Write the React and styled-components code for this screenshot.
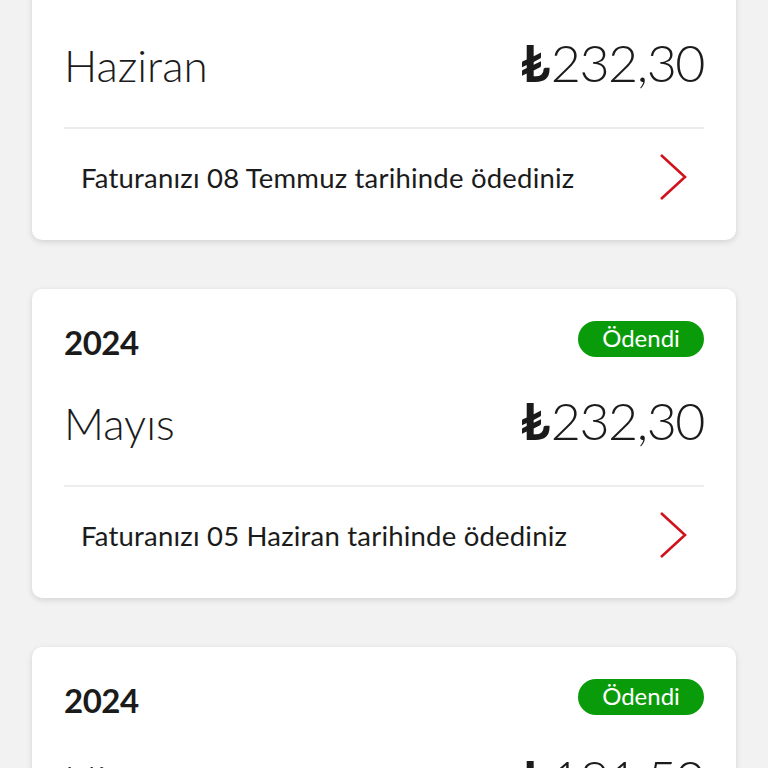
import React from 'react'
import styled, { createGlobalStyle } from 'styled-components'

const bills = [
  { year: '2024', month: 'Haziran', amount: '232,30', note: 'Faturanızı 08 Temmuz tarihinde ödediniz' },
  { year: '2024', month: 'Mayıs', amount: '232,30', note: 'Faturanızı 05 Haziran tarihinde ödediniz' },
  { year: '2024', month: 'Nisan', amount: '181,50', note: 'Faturanızı 05 Mayıs tarihinde ödediniz' },
]

function Chevron() {
  return (
    <svg width="30" height="50" viewBox="0 0 30 50">
      <polyline points="3,3 27,25 3,47" fill="none" stroke="#d0141f" strokeWidth="2.6" />
    </svg>
  )
}

function BillCard({ bill }) {
  return (
    <Card>
      <Header>
        <Year>{bill.year}</Year>
        <Badge>Ödendi</Badge>
      </Header>
      <MonthRow>
        <Month>{bill.month}</Month>
        <Amount><Lira>₺</Lira>{bill.amount}</Amount>
      </MonthRow>
      <Footer>
        <Note>{bill.note}</Note>
        <Chevron />
      </Footer>
    </Card>
  )
}

export default function App() {
  return (
    <>
      <Global />
      <Page>
        <List>
          {bills.map((b, i) => <BillCard key={i} bill={b} />)}
        </List>
      </Page>
    </>
  )
}

const Global = createGlobalStyle`
  html, body {
    margin: 0;
    background: #f2f2f2;
    height: 768px;
    overflow: hidden;
  }
  body {
    font-family: Lato, "Open Sans", sans-serif;
    color: #1b1b1b;
  }
`

const Page = styled.div`
  padding: 0 32px;
  height: 768px;
  overflow: hidden;
`

const List = styled.div`
  display: flex;
  flex-direction: column;
  gap: 49px;
  margin-top: -69px;
`

const Card = styled.div`
  background: #fff;
  border-radius: 10px;
  box-shadow: 0 2px 6px rgba(0, 0, 0, 0.13);
  padding: 32px 32px 0;
  height: 309px;
  box-sizing: border-box;
`

const Header = styled.div`
  display: flex;
  justify-content: space-between;
  align-items: center;
  height: 36px;
`

const Year = styled.div`
  font-size: 33px;
  font-weight: 700;
  letter-spacing: -0.5px;
  padding-top: 5px;
`

const Badge = styled.div`
  width: 126px;
  height: 36px;
  border-radius: 18px;
  background: #0a9b0a;
  color: #fff;
  font-size: 24px;
  display: flex;
  align-items: center;
  justify-content: center;
  line-height: 1;
  padding-bottom: 3px;
  box-sizing: border-box;
`

const MonthRow = styled.div`
  display: flex;
  justify-content: space-between;
  align-items: baseline;
  height: 130px;
  padding-top: 37px;
  box-sizing: border-box;
  border-bottom: 2px solid #ececec;
  line-height: 1;
`

const Month = styled.div`
  font-size: 44px;
  font-weight: 300;
`

const Amount = styled.div`
  font-size: 52px;
  font-weight: 300;
  letter-spacing: -1.5px;
`

const Lira = styled.span`
  font-weight: 700;
  margin-right: 2px;
`

const Footer = styled.div`
  display: flex;
  justify-content: space-between;
  align-items: center;
  padding: 23px 16px 0 17px;
`

const Note = styled.div`
  font-size: 27.5px;
  font-weight: 400;
  letter-spacing: 0.2px;
`
